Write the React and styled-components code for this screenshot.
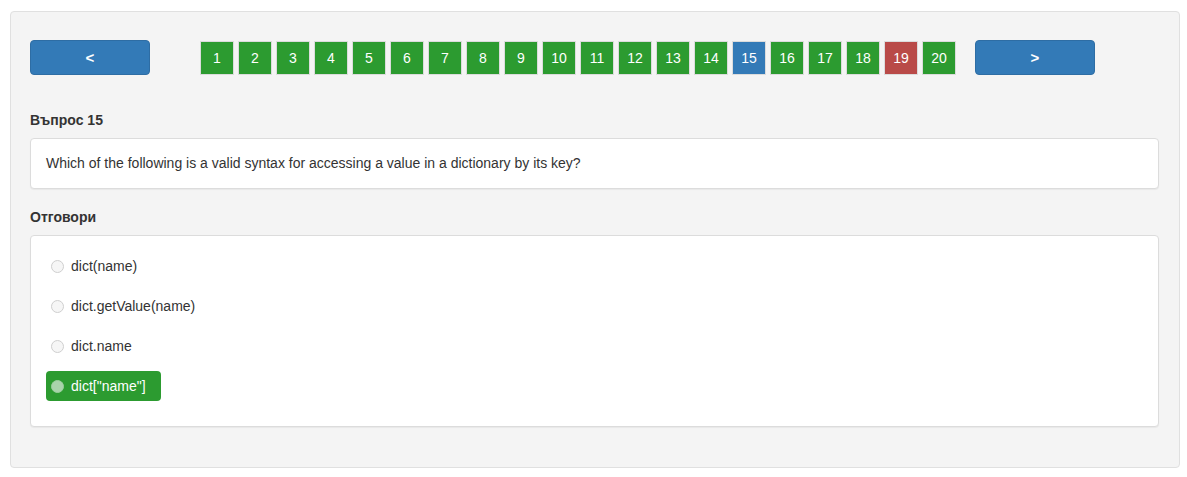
import styled, { createGlobalStyle } from 'styled-components';

const GlobalStyle = createGlobalStyle`
  body {
    margin: 0;
    background: #fff;
    font-family: "Liberation Sans", Arial, sans-serif;
    color: #333;
  }
`;

const pages = Array.from({ length: 20 }, (_, i) => i + 1);
const answers = ['dict(name)', 'dict.getValue(name)', 'dict.name', 'dict["name"]'];

const pageColor = n => {
  if (n === 15) return '#337ab7';
  if (n === 19) return '#b94a48';
  return '#2c9b30';
};

export default function App () {
  return (
    <>
      <GlobalStyle />
      <Page>
        <Panel>
          <NavRow>
            <NavButton>&lt;</NavButton>
            <Pages>
              {pages.map(n => (
                <PageBox key={n} color={pageColor(n)}>{n}</PageBox>
              ))}
            </Pages>
            <NavButton>&gt;</NavButton>
          </NavRow>
          <Label>Въпрос 15</Label>
          <QuestionCard>
            Which of the following is a valid syntax for accessing a value in a dictionary by its key?
          </QuestionCard>
          <Label second>Отговори</Label>
          <AnswerCard>
            {answers.map((a, i) => (
              <AnswerRow key={a}>
                <Answer selected={i === 3}>
                  <Radio selected={i === 3} />
                  {a}
                </Answer>
              </AnswerRow>
            ))}
          </AnswerCard>
        </Panel>
      </Page>
    </>
  );
}

const Page = styled.div`
  padding: 11px 7px 10px 10px;
`;
const Panel = styled.div`
  background: #f4f4f4;
  border: 1px solid #e0e0e0;
  border-radius: 4px;
  padding: 28px 20px 40px 19px;
`;
const NavRow = styled.div`
  display: flex;
  align-items: center;
  height: 35px;
`;
const NavButton = styled.button`
  width: 120px;
  height: 35px;
  background: #337ab7;
  color: #fff;
  border: 1px solid #2e6da4;
  border-radius: 4px;
  font-family: "Liberation Sans", Arial, sans-serif;
  font-size: 15px;
  font-weight: bold;
  padding: 0;
`;
const Pages = styled.div`
  display: flex;
  gap: 4px;
  margin: 0 19px 0 50px;
`;
const PageBox = styled.div`
  width: 32px;
  height: 32px;
  border: 1px solid #dcdcdc;
  background: ${props => props.color};
  color: #fff;
  font-size: 14px;
  display: flex;
  align-items: center;
  justify-content: center;
`;
const Label = styled.div`
  font-size: 14px;
  font-weight: bold;
  line-height: 18px;
  margin: ${props => props.second ? '19px' : '36px'} 0 9px;
`;
const QuestionCard = styled.div`
  background: #fff;
  border: 1px solid #dcdcdc;
  border-radius: 4px;
  box-shadow: 0 1px 1px rgba(0, 0, 0, 0.05);
  padding: 16px 15px;
  font-size: 14px;
  line-height: 17px;
`;
const AnswerCard = styled.div`
  background: #fff;
  border: 1px solid #dcdcdc;
  border-radius: 4px;
  box-shadow: 0 1px 1px rgba(0, 0, 0, 0.05);
  padding: 15px;
  display: flex;
  flex-direction: column;
`;
const AnswerRow = styled.div`
  display: flex;
  margin-bottom: 10px;
`;
const Answer = styled.div`
  display: inline-flex;
  align-items: center;
  gap: 7px;
  height: 30px;
  padding: 0 15px 0 5px;
  border-radius: 4px;
  font-size: 14px;
  background: ${props => props.selected ? '#2c9b30' : 'transparent'};
  color: ${props => props.selected ? '#fff' : '#333'};
`;
const Radio = styled.span`
  width: 11px;
  height: 11px;
  border-radius: 50%;
  border: 1px solid ${props => props.selected ? '#9ccf9e' : '#cfcfcf'};
  background: ${props => props.selected ? '#a9d3ab' : '#f6f6f6'};
`;
